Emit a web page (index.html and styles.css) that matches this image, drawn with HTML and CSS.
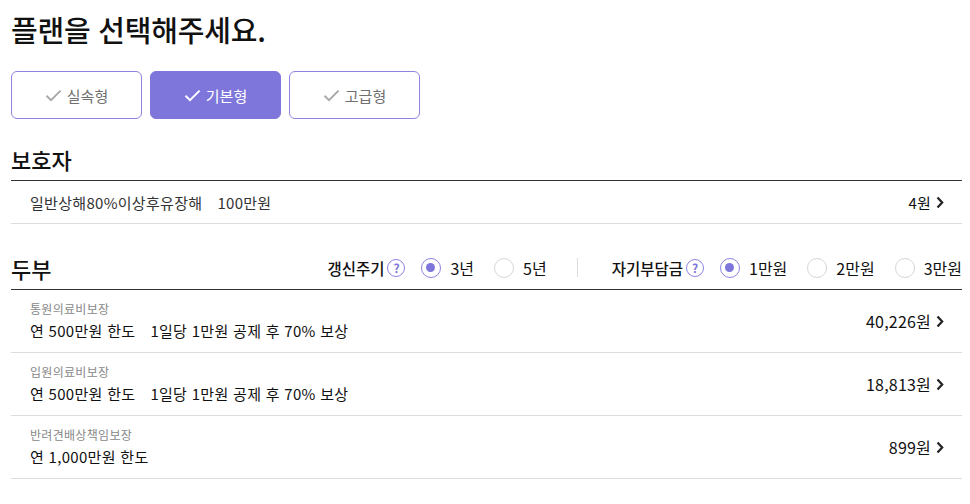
FILE: index.html
```html
<!DOCTYPE html>
<html lang="ko">
<head>
	<meta charset="UTF-8">
	<meta name="viewport" content="width=device-width, initial-scale=1.0">
	<title>플랜 선택</title>
	<link rel="stylesheet" href="styles.css">
</head>
<body>
	<div class="page">
		<h1 class="title">플랜을 선택해주세요.</h1>

		<div class="plans">
			<div class="plan">
				<svg class="check" viewBox="0 0 17 13"><path d="M1.5 6.8 L6 11.2 L15.6 1.6"/></svg>
				<span>실속형</span>
			</div>
			<div class="plan active">
				<svg class="check" viewBox="0 0 17 13"><path d="M1.5 6.8 L6 11.2 L15.6 1.6"/></svg>
				<span>기본형</span>
			</div>
			<div class="plan">
				<svg class="check" viewBox="0 0 17 13"><path d="M1.5 6.8 L6 11.2 L15.6 1.6"/></svg>
				<span>고급형</span>
			</div>
		</div>

		<div class="section">
			<div class="section-head">
				<h2>보호자</h2>
			</div>
			<div class="row row-single">
				<div class="row-text">
					<span>일반상해80%이상후유장해</span><span class="gap">100만원</span>
				</div>
				<div class="price">4원 <svg class="arrow" viewBox="0 0 8 13"><path d="M1.5 1.5 L6.2 6.5 L1.5 11.5"/></svg></div>
			</div>
		</div>

		<div class="section second">
			<div class="section-head">
				<h2>두부</h2>
				<div class="options">
					<div class="option-group">
						<span class="option-label">갱신주기</span>
						<span class="help">?</span>
						<label class="radio checked"><i></i>3년</label>
						<label class="radio"><i></i>5년</label>
					</div>
					<div class="divider"></div>
					<div class="option-group">
						<span class="option-label">자기부담금</span>
						<span class="help">?</span>
						<label class="radio checked"><i></i>1만원</label>
						<label class="radio"><i></i>2만원</label>
						<label class="radio"><i></i>3만원</label>
					</div>
				</div>
			</div>

			<div class="row">
				<div class="row-text">
					<div class="row-label">통원의료비보장</div>
					<div class="row-main">연 500만원 한도<span class="gap">1일당 1만원 공제 후 70% 보상</span></div>
				</div>
				<div class="price">40,226원 <svg class="arrow" viewBox="0 0 8 13"><path d="M1.5 1.5 L6.2 6.5 L1.5 11.5"/></svg></div>
			</div>
			<div class="row">
				<div class="row-text">
					<div class="row-label">입원의료비보장</div>
					<div class="row-main">연 500만원 한도<span class="gap">1일당 1만원 공제 후 70% 보상</span></div>
				</div>
				<div class="price">18,813원 <svg class="arrow" viewBox="0 0 8 13"><path d="M1.5 1.5 L6.2 6.5 L1.5 11.5"/></svg></div>
			</div>
			<div class="row">
				<div class="row-text">
					<div class="row-label">반려견배상책임보장</div>
					<div class="row-main">연 1,000만원 한도</div>
				</div>
				<div class="price">899원 <svg class="arrow" viewBox="0 0 8 13"><path d="M1.5 1.5 L6.2 6.5 L1.5 11.5"/></svg></div>
			</div>
		</div>
	</div>
</body>
</html>
```

FILE: styles.css
```css
body {
	margin: 0;
	background-color: #fff;
	font-family: "Noto Sans CJK KR", "Noto Sans", sans-serif;
	color: #111;
}

.page {
	padding: 9px 8px 0 11px;
}

.title {
	margin: 0;
	font-size: 29px;
	line-height: 40px;
	font-weight: 500;
	letter-spacing: -0.2px;
}

.plans {
	display: flex;
	gap: 8px;
	margin-top: 22px;
}

.plan {
	width: 131px;
	height: 48px;
	box-sizing: border-box;
	border: 1px solid #8d84e2;
	border-radius: 6px;
	display: flex;
	justify-content: center;
	align-items: center;
	gap: 5px;
	font-size: 15px;
	color: #707070;
	cursor: pointer;
}

.plan .check {
	width: 17px;
	height: 13px;
	fill: none;
	stroke: #aaa;
	stroke-width: 2;
}

.plan.active {
	background-color: #7f76db;
	border-color: #7f76db;
	color: #fff;
}

.plan.active .check {
	stroke: #fff;
}

.section {
	margin-top: 22px;
}

.section.second {
	margin-top: 26px;
}

.section-head {
	height: 40px;
	box-sizing: border-box;
	padding-bottom: 4px;
	border-bottom: 1px solid #333;
	display: flex;
	justify-content: space-between;
	align-items: center;
}

.section-head h2 {
	margin: 0;
	font-size: 22px;
	font-weight: 500;
}

.options {
	display: flex;
	align-items: center;
	font-size: 16px;
}

.option-group {
	display: flex;
	align-items: center;
}

.option-label {
	font-size: 15.5px;
	font-weight: 500;
	margin-right: 3px;
}

.help {
	width: 18px;
	height: 18px;
	box-sizing: border-box;
	border: 1.5px solid #8d84e2;
	border-radius: 50%;
	color: #7f76db;
	font-size: 12px;
	font-weight: 700;
	line-height: 15px;
	text-align: center;
	margin-right: 16px;
}

.radio {
	display: flex;
	align-items: center;
	margin-right: 20px;
}

.radio:last-child {
	margin-right: 0;
}

.radio i {
	width: 20px;
	height: 20px;
	box-sizing: border-box;
	border: 1px solid #d6d6d6;
	border-radius: 50%;
	margin-right: 9px;
	position: relative;
}

.radio.checked i {
	border: 1.5px solid #8d84e2;
}

.radio.checked i:after {
	content: '';
	position: absolute;
	top: 4px;
	left: 4px;
	width: 9px;
	height: 9px;
	border-radius: 50%;
	background-color: #7f76db;
}

.divider {
	width: 1px;
	height: 19px;
	background-color: #ddd;
	margin: 0 34px 0 30px;
}

.row {
	height: 63px;
	box-sizing: border-box;
	padding: 0 18px 0 19px;
	border-bottom: 1px solid #ddd;
	display: flex;
	justify-content: space-between;
	align-items: center;
}

.row-single {
	height: 43px;
	font-size: 15px;
	letter-spacing: 0.3px;
	color: #333;
}

.row-single .price {
	font-size: 15px;
}

.row-label {
	font-size: 12px;
	line-height: 16px;
	color: #888;
	letter-spacing: 0.3px;
}

.row-main {
	margin-top: 3px;
	font-size: 15px;
	line-height: 22px;
	letter-spacing: 0.3px;
}

.gap {
	margin-left: 15px;
}

.price {
	display: flex;
	align-items: center;
	font-size: 16px;
	letter-spacing: 0.2px;
	color: #111;
}

.arrow {
	width: 8px;
	height: 13px;
	margin-left: 5px;
	fill: none;
	stroke: #222;
	stroke-width: 2.2;
}
```
